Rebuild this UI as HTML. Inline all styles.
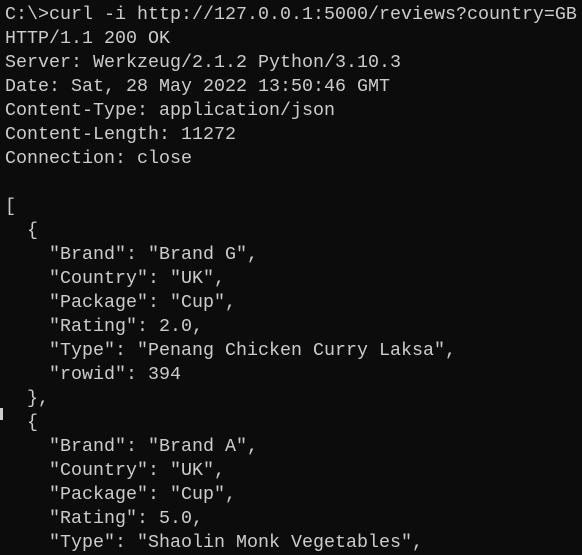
<!DOCTYPE html>
<html><head><style>
html,body{margin:0;padding:0;background:#0c0c0c;width:582px;height:547px;overflow:hidden}
pre{margin:0;position:absolute;left:5px;top:3px;font-family:"Liberation Mono",monospace;font-size:18.33px;line-height:24px;color:#cccccc;white-space:pre}
.cur{position:absolute;left:0;top:408px;width:3px;height:12px;background:#cccccc}
</style></head><body>
<pre>C:\&gt;curl -i http://127.0.0.1:5000/reviews?country=GB
HTTP/1.1 200 OK
Server: Werkzeug/2.1.2 Python/3.10.3
Date: Sat, 28 May 2022 13:50:46 GMT
Content-Type: application/json
Content-Length: 11272
Connection: close

[
  {
    "Brand": "Brand G",
    "Country": "UK",
    "Package": "Cup",
    "Rating": 2.0,
    "Type": "Penang Chicken Curry Laksa",
    "rowid": 394
  },
  {
    "Brand": "Brand A",
    "Country": "UK",
    "Package": "Cup",
    "Rating": 5.0,
    "Type": "Shaolin Monk Vegetables",</pre>
<div class="cur"></div>
</body></html>
